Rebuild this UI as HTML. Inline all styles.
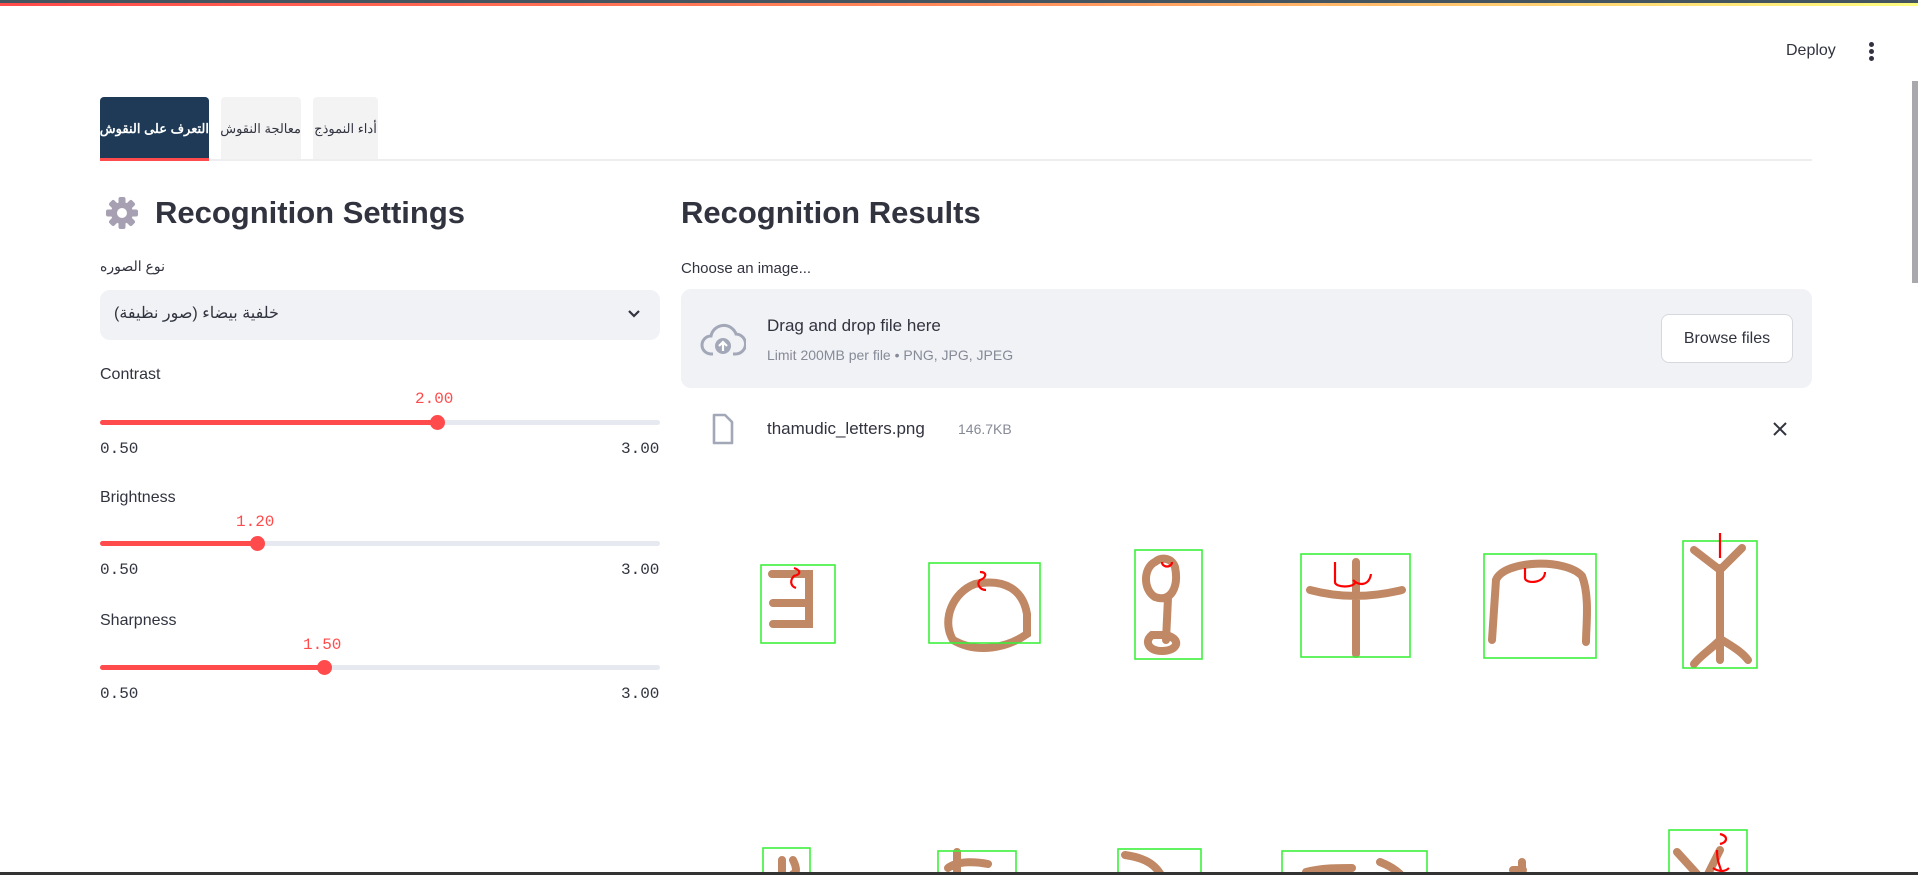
<!DOCTYPE html>
<html><head><meta charset="utf-8">
<style>
*{margin:0;padding:0;box-sizing:border-box}
body{width:1918px;height:875px;overflow:hidden;background:#fff;font-family:"Liberation Sans","Noto Sans CJK SC",sans-serif;color:#31333f;position:relative}
.abs{position:absolute}
.mono{font-family:"Liberation Mono",monospace}
.ar{font-family:"Liberation Sans","Noto Sans CJK SC",sans-serif;direction:rtl}
</style></head><body>
<div class="abs" style="left:0;top:0;width:1918px;height:3px;background:#44555f"></div>
<div class="abs" style="left:0;top:3px;width:1918px;height:3px;background:linear-gradient(90deg,#ff4b4b,#ff8a5b 50%,#fffd80)"></div>
<div class="abs" style="left:1786px;top:42px;font-size:16px">Deploy</div>
<div class="abs" style="left:1869px;top:42px;width:5px;height:5px;border-radius:50%;background:#31333f"></div>
<div class="abs" style="left:1869px;top:49px;width:5px;height:5px;border-radius:50%;background:#31333f"></div>
<div class="abs" style="left:1869px;top:56px;width:5px;height:5px;border-radius:50%;background:#31333f"></div>
<div class="abs" style="left:1912px;top:81px;width:6px;height:202px;background:#a9a9ad"></div>

<div class="abs" style="left:100px;top:159px;width:1712px;height:2px;background:#eeeef0"></div>
<div class="abs ar" style="left:100px;top:97px;width:109px;height:64px;background:#1e3a56;color:#fff;font-size:13px;font-weight:bold;line-height:64px;text-align:center;border-radius:4px 4px 0 0;border-bottom:3px solid #ff4b4b;white-space:nowrap;overflow:hidden">التعرف على النقوش</div>
<div class="abs ar" style="left:221px;top:97px;width:80px;height:62px;background:#f3f3f4;font-size:13px;line-height:64px;text-align:center;border-radius:4px 4px 0 0;white-space:nowrap">معالجة النقوش</div>
<div class="abs ar" style="left:313px;top:97px;width:65px;height:62px;background:#f3f3f4;font-size:13px;line-height:64px;text-align:center;border-radius:4px 4px 0 0;white-space:nowrap">أداء النموذج</div>

<svg class="abs" style="left:105px;top:196px" width="34" height="34" viewBox="0 0 34 34">
<g fill="#a79fb2"><circle cx="17" cy="17" r="11"/>
<rect x="13.5" y="1" width="7" height="32" rx="2"/><rect x="1" y="13.5" width="32" height="7" rx="2"/>
<rect x="13.5" y="1" width="7" height="32" rx="2" transform="rotate(45 17 17)"/><rect x="13.5" y="1" width="7" height="32" rx="2" transform="rotate(-45 17 17)"/></g>
<circle cx="17" cy="17" r="5" fill="#fff"/></svg>
<div class="abs" style="left:155px;top:195px;font-size:31px;font-weight:bold;white-space:nowrap">Recognition Settings</div>
<div class="abs ar" style="left:100px;top:258px;font-size:14px">نوع الصوره</div>
<div class="abs" style="left:100px;top:290px;width:560px;height:50px;background:#f0f2f6;border-radius:10px"></div>
<div class="abs ar" style="left:114px;top:303px;font-size:16px">خلفية بيضاء (صور نظيفة)</div>
<svg class="abs" style="left:626px;top:305px" width="16" height="16" viewBox="0 0 16 16"><path d="M3 6l5 5 5-5" fill="none" stroke="#31333f" stroke-width="2.2"/></svg>

<div class="abs" style="left:100px;top:366px;font-size:16px">Contrast</div>
<div class="abs mono" style="left:415px;top:390px;font-size:16px;color:#ff4b4b">2.00</div>
<div class="abs" style="left:100px;top:420px;width:560px;height:5px;background:#e6e9ef;border-radius:3px"></div>
<div class="abs" style="left:100px;top:420px;width:337px;height:5px;background:#ff4b4b;border-radius:3px"></div>
<div class="abs" style="left:430px;top:415px;width:15px;height:15px;border-radius:50%;background:#ff4b4b"></div>
<div class="abs mono" style="left:100px;top:440px;font-size:16px">0.50</div>
<div class="abs mono" style="left:621px;top:440px;font-size:16px">3.00</div>

<div class="abs" style="left:100px;top:489px;font-size:16px">Brightness</div>
<div class="abs mono" style="left:236px;top:513px;font-size:16px;color:#ff4b4b">1.20</div>
<div class="abs" style="left:100px;top:541px;width:560px;height:5px;background:#e6e9ef;border-radius:3px"></div>
<div class="abs" style="left:100px;top:541px;width:157px;height:5px;background:#ff4b4b;border-radius:3px"></div>
<div class="abs" style="left:250px;top:536px;width:15px;height:15px;border-radius:50%;background:#ff4b4b"></div>
<div class="abs mono" style="left:100px;top:561px;font-size:16px">0.50</div>
<div class="abs mono" style="left:621px;top:561px;font-size:16px">3.00</div>

<div class="abs" style="left:100px;top:612px;font-size:16px">Sharpness</div>
<div class="abs mono" style="left:303px;top:636px;font-size:16px;color:#ff4b4b">1.50</div>
<div class="abs" style="left:100px;top:665px;width:560px;height:5px;background:#e6e9ef;border-radius:3px"></div>
<div class="abs" style="left:100px;top:665px;width:224px;height:5px;background:#ff4b4b;border-radius:3px"></div>
<div class="abs" style="left:317px;top:660px;width:15px;height:15px;border-radius:50%;background:#ff4b4b"></div>
<div class="abs mono" style="left:100px;top:685px;font-size:16px">0.50</div>
<div class="abs mono" style="left:621px;top:685px;font-size:16px">3.00</div>

<div class="abs" style="left:681px;top:195px;font-size:31px;font-weight:bold;white-space:nowrap">Recognition Results</div>
<div class="abs" style="left:681px;top:260px;font-size:15px">Choose an image...</div>
<div class="abs" style="left:681px;top:289px;width:1131px;height:99px;background:#f0f2f6;border-radius:10px"></div>
<svg class="abs" style="left:700px;top:322px" width="46" height="36" viewBox="0 0 46 36"><path d="M13 32H11A9 9 0 0 1 11 14 13 13 0 0 1 36 12 10 10 0 0 1 35 32H33" fill="none" stroke="#a3a8b8" stroke-width="3"/><circle cx="23" cy="24" r="8" fill="#a3a8b8"/><path d="M23 29v-9M19 24l4-4 4 4" fill="none" stroke="#fff" stroke-width="2.2"/></svg>
<div class="abs" style="left:767px;top:316px;font-size:17px">Drag and drop file here</div>
<div class="abs" style="left:767px;top:347px;font-size:14px;color:#868a96">Limit 200MB per file • PNG, JPG, JPEG</div>
<div class="abs" style="left:1661px;top:314px;width:132px;height:49px;background:#fff;border:1px solid #d6d8de;border-radius:8px;font-size:16px;line-height:47px;text-align:center">Browse files</div>
<svg class="abs" style="left:711px;top:413px" width="24" height="32" viewBox="0 0 24 32"><path d="M3 2h11l7 7v21H3z" fill="none" stroke="#a3a8b8" stroke-width="2.6" stroke-linejoin="round"/></svg>
<div class="abs" style="left:767px;top:419px;font-size:17px">thamudic_letters.png</div>
<div class="abs" style="left:958px;top:421px;font-size:14px;color:#868a96">146.7KB</div>
<svg class="abs" style="left:1772px;top:421px" width="16" height="16" viewBox="0 0 16 16"><path d="M2 2l12 12M14 2L2 14" stroke="#31333f" stroke-width="2"/></svg>

<svg class="abs" style="left:681px;top:520px" width="1131" height="355" viewBox="681 520 1131 355">
<g fill="none" stroke="#c08864" stroke-width="8" stroke-linecap="round">
<path d="M772 574h37v50h-36M773 603h34"/>
<path d="M975 584c30-6 48 6 52 30v20c-20 14-50 20-74 6-12-20 0-48 22-56z"/>
<path d="M1155 562c-12 6-12 28 0 35 16 6 24-10 20-30-4-10-14-10-20-5M1168 598l-2 42M1152 635c-8 6-4 16 10 16 16 0 20-12 4-16z"/>
<path d="M1310 590c30 8 60 8 92 0M1356 562v92"/>
<path d="M1492 640l4-60c8-20 70-22 86-4 8 20 4 50 4 66"/>
<path d="M1694 550l26 20 22-22M1720 568v92M1720 640c-10 10-20 16-26 24M1722 640c10 6 20 12 26 20"/>
<path d="M782 872l0-12M793 860c4 8 4 14 0 14M948 868c10-8 30-6 40-4M957 852v22M1125 855c14 2 28 6 36 20M1306 872c16-4 30-4 46-4M1380 862c10 4 16 8 20 12M1522 862v14M1513 870h10M1677 852l20 22M1720 850l-12 24"/>
</g>
<g fill="none" stroke="#3cf03c" stroke-width="1.6">
<rect x="761" y="565" width="74" height="78"/><rect x="929" y="563" width="111" height="80"/>
<rect x="1135" y="550" width="67" height="109"/><rect x="1301" y="554" width="109" height="103"/>
<rect x="1484" y="554" width="112" height="104"/><rect x="1683" y="541" width="74" height="127"/>
<rect x="763" y="848" width="47" height="30"/><rect x="938" y="851" width="78" height="30"/>
<rect x="1118" y="849" width="83" height="30"/><rect x="1282" y="851" width="145" height="30"/>
<rect x="1669" y="830" width="78" height="50"/></g>
<g fill="none" stroke="#f00" stroke-width="2.2">
<path d="M794 568c6 2 8 6 0 8-4 4-4 10 2 12M980 572c8 0 6 6 0 8-4 4 0 10 6 10"/>
<path d="M1162 562c0 6 10 6 10 0M1335 562v20c0 6 20 6 20 0M1353 580c6 6 16 6 18-6M1525 568v10c0 6 20 6 20-6"/>
<path d="M1720 533v25M1717 850c0 10 2 14 4 20M1720 834c8 2 8 8 0 10M1713 868c6 4 12 4 16 0"/>
</g></svg>
<div class="abs" style="left:0;top:872px;width:1918px;height:3px;background:#333"></div>
</body></html>
